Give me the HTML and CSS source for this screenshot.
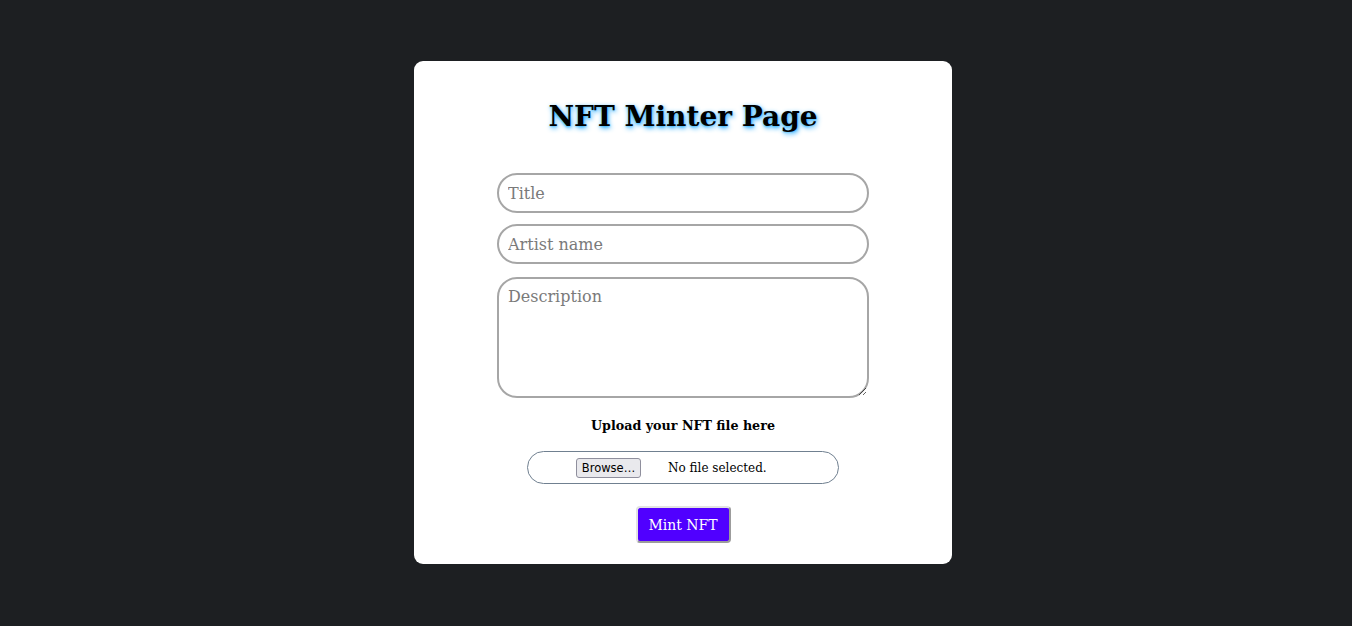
FILE: index.html
```html
<!DOCTYPE html>
<html>
<head>
<meta charset="utf-8">
<title>NFT Minter</title>
<link rel="stylesheet" href="styles.css">
</head>
<body>
<main class="page">
  <section class="card">
    <h1 class="title">NFT Minter Page</h1>
    <form class="form">
      <input class="field" type="text" placeholder="Title">
      <input class="field" type="text" placeholder="Artist name">
      <textarea class="field area" placeholder="Description"></textarea>
      <p class="upload-label">Upload your NFT file here</p>
      <div class="file-box">
        <span class="browse">Browse…</span>
        <span class="file-status">No file selected.</span>
      </div>
      <button class="mint" type="button">Mint NFT</button>
    </form>
  </section>
</main>
</body>
</html>
```

FILE: styles.css
```css
html, body {
  margin: 0;
  padding: 0;
}
body {
  background: #1d1f22;
  font-family: "DejaVu Serif", serif;
}
.page {
  min-height: 625px;
  display: flex;
  align-items: center;
  justify-content: center;
  padding-left: 14px;
  box-sizing: border-box;
}
.card {
  width: 538px;
  height: 503px;
  box-sizing: border-box;
  background: #ffffff;
  border-radius: 9px;
  display: flex;
  flex-direction: column;
  align-items: center;
  padding-top: 39px;
}
.title {
  margin: 0;
  font-size: 28px;
  font-weight: bold;
  color: #000;
  line-height: 33px;
  text-shadow: 1px 2px 5px #1aa6ff, 0 1px 2px #8ad6ff;
}
.form {
  display: flex;
  flex-direction: column;
  align-items: center;
  margin-top: 40px;
}
.field {
  width: 372px;
  height: 40px;
  box-sizing: border-box;
  border: 2px solid #a6a6a6;
  border-radius: 20px;
  padding: 0 9px;
  font-family: "DejaVu Serif", serif;
  font-size: 16px;
  color: #000;
  background: #fff;
  outline: none;
  margin: 0 0 11px 0;
}
.field::placeholder {
  color: #7a7a7a;
}
.area {
  height: 121px;
  padding: 8px 9px;
  margin-top: 2px;
  resize: vertical;
  margin-bottom: 0;
}
.upload-label {
  margin: 18px 0 0 0;
  font-size: 12.7px;
  font-weight: bold;
  line-height: 20px;
}
.file-box {
  margin-top: 15px;
  width: 312px;
  height: 33px;
  box-sizing: border-box;
  border: 1px solid #708090;
  border-radius: 17px;
  display: flex;
  align-items: center;
  padding-left: 48px;
  font-size: 12px;
}
.browse {
  font-family: "DejaVu Sans", sans-serif;
  font-size: 11.5px;
  height: 20px;
  line-height: 18px;
  box-sizing: border-box;
  width: 65px;
  text-align: center;
  border: 1px solid #8f8f9d;
  border-radius: 3px;
  background: #e9e9ed;
  color: #000;
}
.file-status {
  margin-left: 27px;
  font-size: 12px;
  color: #000;
}
.mint {
  margin-top: 22px;
  width: 95px;
  height: 37px;
  box-sizing: border-box;
  background: #5000ff;
  color: #fff;
  font-family: "DejaVu Serif", serif;
  font-size: 14px;
  border: 2px solid;
  border-color: #e2e2e2 #9c9c9c #9c9c9c #e2e2e2;
  border-radius: 4px;
  padding: 0;
}
```
